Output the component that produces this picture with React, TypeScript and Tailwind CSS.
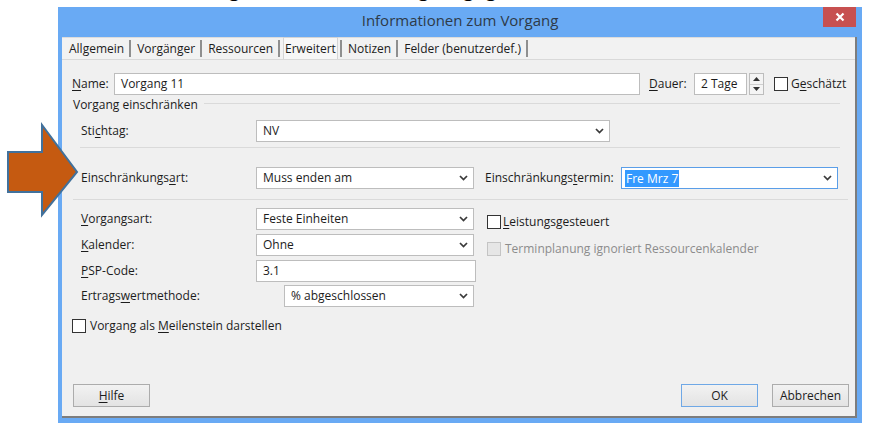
import React from "react";

function Chevron() {
  return (
    <svg width="9" height="6" viewBox="0 0 9 6" className="shrink-0">
      <path d="M1 1 L4.5 4.6 L8 1" fill="none" stroke="#3a3a3a" strokeWidth="1.7" />
    </svg>
  );
}

function Select({ value, className = "", focused = false }: { value: string; className?: string; focused?: boolean }) {
  return (
    <div
      className={`h-[22px] bg-white border flex items-center justify-between pl-[6px] pr-[5px] ${
        focused ? "border-[#5a9ee8]" : "border-[#bdbdbd]"
      } ${className}`}
    >
      {focused ? (
        <span className="bg-[#3399ff] text-white leading-[17px] px-[1px] -ml-[3px]">{value}</span>
      ) : (
        <span>{value}</span>
      )}
      <Chevron />
    </div>
  );
}

function Input({ value, className = "" }: { value: string; className?: string }) {
  return (
    <div className={`h-[22px] bg-white border border-[#bdbdbd] flex items-center pl-[6px] ${className}`}>
      <span>{value}</span>
    </div>
  );
}

function Checkbox({ disabled = false }: { disabled?: boolean }) {
  return (
    <div
      className={`w-[14px] h-[14px] border shrink-0 ${
        disabled ? "border-[#c4c4c4] bg-[#e6e6e6]" : "border-[#333333] bg-white"
      }`}
    />
  );
}

function Button({ children, primary = false }: { children: React.ReactNode; primary?: boolean }) {
  return (
    <div
      className={`w-[77px] h-[23px] flex items-center justify-center border bg-gradient-to-b from-[#f2f2f2] to-[#e3e3e3] ${
        primary ? "border-[#6fa8e6]" : "border-[#acacac]"
      }`}
    >
      {children}
    </div>
  );
}

function Tab({ label, active = false }: { label: string; active?: boolean }) {
  return (
    <div className="flex items-end">
      <div
        className={`flex items-center ${
          active ? "h-[22px] px-[1px] bg-[#f7f7f7] border-x border-t border-[#d4d4d4]" : "h-[20px] px-[3px]"
        }`}
      >
        {label}
      </div>
      <div className="w-[2px] h-[17px] mb-[2px] bg-[#8f8f8f] ml-[2px] mr-[3px]" />
    </div>
  );
}

export default function App() {
  return (
    <div className="w-[872px] h-[430px] bg-white relative overflow-hidden flex flex-col font-['Open_Sans',sans-serif] font-medium text-[12px] text-[#1c1c1c]">
      {/* clipped heading above the dialog */}
      <div className="h-[7px] overflow-hidden pl-[63px] shrink-0">
        <div className="text-[27px] leading-none -mt-[27px] text-black font-['Liberation_Sans',sans-serif] font-normal whitespace-nowrap">
          Einschränkung für diesen Vorgang gelten
        </div>
      </div>

      <div className="pl-[58px]">
        <div className="w-[804px] h-[416px] bg-[#69aaf4] flex flex-col">
          {/* title bar */}
          <div className="h-[30px] relative flex items-center justify-center pb-[3px] shrink-0">
            <span className="text-[15px] font-normal text-[#2e3a48]">Informationen zum Vorgang</span>
            <div className="absolute right-[6px] top-0 w-[33px] h-[20px] bg-[#c75050] flex items-center justify-center">
              <svg width="10" height="10" viewBox="0 0 10 10">
                <path d="M1.5 1.5 L8.5 8.5 M8.5 1.5 L1.5 8.5" stroke="#ffffff" strokeWidth="2.2" />
              </svg>
            </div>
          </div>

          {/* client area */}
          <div className="ml-[4px] mr-[5px] mb-[5px] flex-1 bg-[#f0f0f0] border-r-2 border-b-2 border-[#7d7d7d] flex flex-col">
            {/* tab strip */}
            <div className="h-[23px] shrink-0 flex items-end pl-[4px] border-t border-[#dcdcdc] border-b border-b-[#d9d9d9] bg-[#f2f2f2]">
              <Tab label="Allgemein" />
              <Tab label="Vorgänger" />
              <Tab label="Ressourcen" />
              <Tab label="Erweitert" active />
              <Tab label="Notizen" />
              <Tab label="Felder (benutzerdef.)" />
            </div>

            {/* panel */}
            <div className="flex-1 flex flex-col">
              {/* Name row */}
              <div className="mt-[13px] h-[22px] flex items-center pl-[10px]">
                <span className="w-[42px]">
                  <u className="underline-offset-2">N</u>ame:
                </span>
                <Input value="Vorgang 11" className="w-[526px]" />
                <span className="ml-[9px] w-[45px]">
                  <u className="underline-offset-2">D</u>auer:
                </span>
                <Input value="2 Tage" className="w-[53px]" />
                <div className="ml-[2px] w-[15px] h-[22px] border border-[#bdbdbd] bg-[#f4f4f4] flex flex-col">
                  <div className="flex-1 flex items-center justify-center border-b border-[#cfcfcf]">
                    <svg width="7" height="4" viewBox="0 0 7 4">
                      <path d="M0 4 L3.5 0 L7 4 Z" fill="#333" />
                    </svg>
                  </div>
                  <div className="flex-1 flex items-center justify-center">
                    <svg width="7" height="4" viewBox="0 0 7 4">
                      <path d="M0 0 L3.5 4 L7 0 Z" fill="#333" />
                    </svg>
                  </div>
                </div>
                <div className="ml-[10px]">
                  <Checkbox />
                </div>
                <span className="ml-[3px]">
                  G<u className="underline-offset-2">e</u>schätzt
                </span>
              </div>

              {/* group label */}
              <div className="mt-[2px] h-[16px] flex items-center pl-[11px]">
                <span>Vorgang einschränken</span>
                <div className="ml-[6px] w-[636px] h-px bg-[#dadada] -mt-[3px]" />
              </div>

              {/* Stichtag */}
              <div className="mt-[7px] h-[22px] flex items-center pl-[19px]">
                <span className="w-[175px]">
                  Sti<u className="underline-offset-2">c</u>htag:
                </span>
                <Select value="NV" className="w-[354px]" />
              </div>

              <div className="mt-[5px] ml-[18px] w-[760px] h-px bg-[#dadada]" />

              {/* Einschränkungsart */}
              <div className="mt-[19px] h-[22px] flex items-center pl-[19px]">
                <span className="w-[175px]">
                  Einschränkungs<u className="underline-offset-2">a</u>rt:
                </span>
                <Select value="Muss enden am" className="w-[218px]" />
                <span className="ml-[11px] w-[136px]">
                  Einschränkungs<u className="underline-offset-2">t</u>ermin:
                </span>
                <Select value="Fre Mrz 7" className="w-[217px]" focused />
              </div>

              <div className="mt-[10px] ml-[11px] w-[775px] h-px bg-[#dadada]" />

              {/* lower section */}
              <div className="mt-[8px] flex pl-[19px]">
                <div className="flex flex-col gap-[4px]">
                  <div className="h-[22px] flex items-center">
                    <span className="w-[175px]">
                      <u className="underline-offset-2">V</u>organgsart:
                    </span>
                    <Select value="Feste Einheiten" className="w-[218px]" />
                  </div>
                  <div className="h-[22px] flex items-center">
                    <span className="w-[175px]">
                      <u className="underline-offset-2">K</u>alender:
                    </span>
                    <Select value="Ohne" className="w-[218px]" />
                  </div>
                  <div className="h-[22px] flex items-center">
                    <span className="w-[175px]">
                      <u className="underline-offset-2">P</u>SP-Code:
                    </span>
                    <Input value="3.1" className="w-[220px]" />
                  </div>
                  <div className="h-[22px] flex items-center -mt-[1px]">
                    <span className="w-[203px]">
                      Ertrags<u className="underline-offset-2">w</u>ertmethode:
                    </span>
                    <Select value="% abgeschlossen" className="w-[190px]" />
                  </div>
                </div>
                <div className="ml-[11px] flex flex-col">
                  <div className="h-[22px] mt-[3px] flex items-center">
                    <Checkbox />
                    <span className="ml-[2px]">
                      <u className="underline-offset-2">L</u>eistungsgesteuert
                    </span>
                  </div>
                  <div className="h-[22px] mt-[5px] flex items-center">
                    <Checkbox disabled />
                    <span className="ml-[4px] text-[#8c8c8c]">Terminplanung ignoriert Ressourcenkalender</span>
                  </div>
                </div>
              </div>

              {/* Meilenstein */}
              <div className="mt-[11px] h-[16px] flex items-center pl-[10px]">
                <Checkbox />
                <span className="ml-[4px]">
                  Vorgang als <u className="underline-offset-2">M</u>eilenstein darstellen
                </span>
              </div>

              {/* buttons */}
              <div className="mt-auto mb-[9px] flex items-center pl-[11px] pr-[6px]">
                <Button>
                  <span>
                    <u className="underline-offset-2">H</u>ilfe
                  </span>
                </Button>
                <div className="flex-1" />
                <Button primary>OK</Button>
                <div className="w-[14px]" />
                <Button>Abbrechen</Button>
              </div>
            </div>
          </div>
        </div>
      </div>

      {/* orange arrow overlay */}
      <svg className="absolute left-[6px] top-[122px]" width="76" height="96" viewBox="0 0 76 96">
        <polygon
          points="2,30 36,30 36,3 71,50 36,93 36,70 2,70"
          fill="#c55a11"
          stroke="#41719c"
          strokeWidth="2"
          strokeLinejoin="miter"
        />
      </svg>
    </div>
  );
}
